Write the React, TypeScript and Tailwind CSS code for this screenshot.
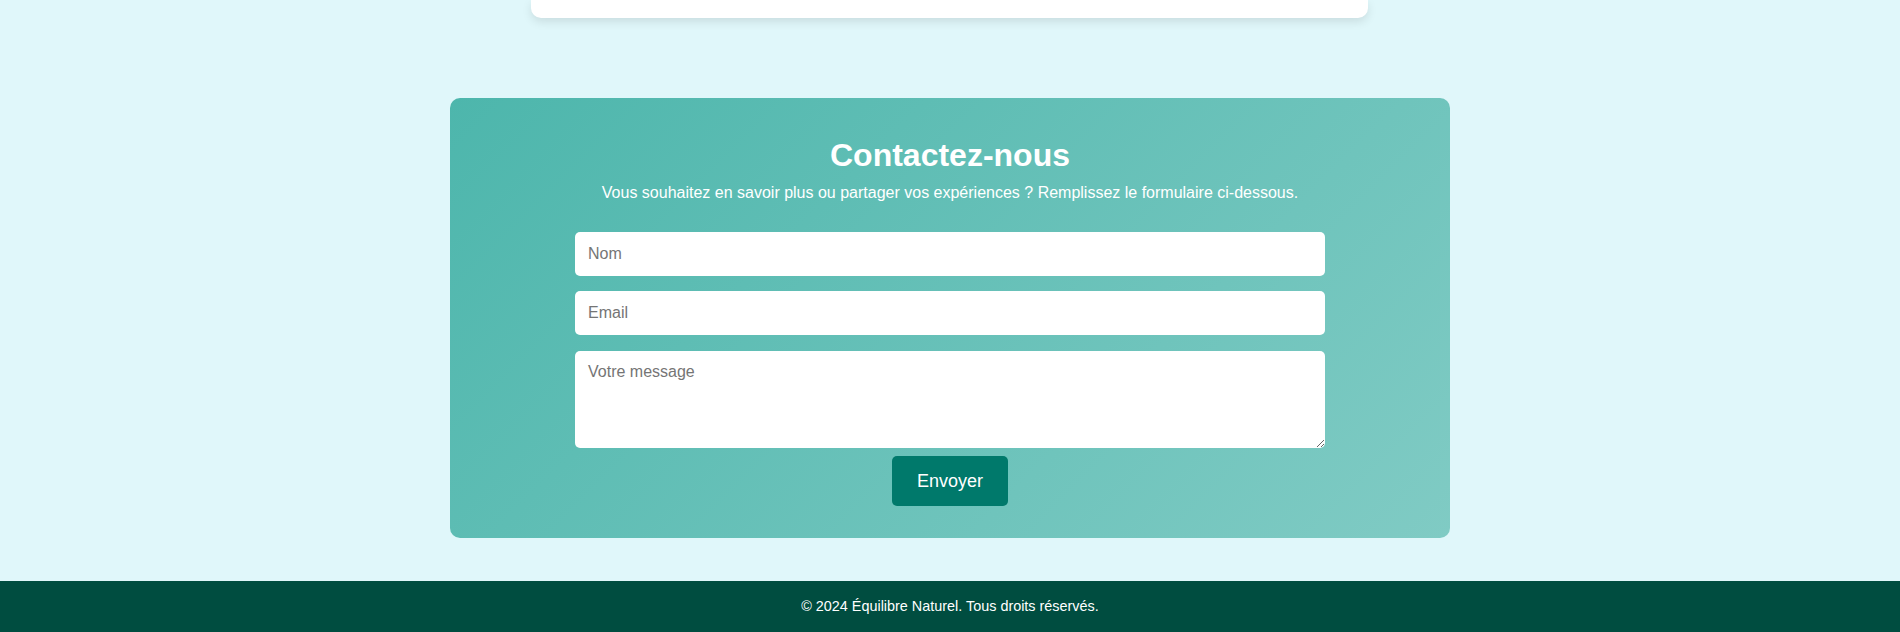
import React from 'react';

export default function App() {
  return (
    <div className="min-h-screen bg-[#e0f7fa] font-['Liberation_Sans',Arial,sans-serif] flex flex-col">
      <div className="flex justify-center">
        <div className="w-[837px] h-[18px] -translate-x-[1px] bg-white rounded-b-[10px] shadow-[0_4px_10px_rgba(0,0,0,0.1)]" />
      </div>

      <div className="flex justify-center mt-[80px]">
        <section className="w-[1000px] rounded-[10px] bg-[linear-gradient(135deg,#4db6ac,#80cbc4)] pt-[39px] pb-[32px] flex flex-col items-center text-white">
          <h2 className="text-[32px] leading-[37px] font-bold">Contactez-nous</h2>
          <p className="mt-[10px] text-[16px] leading-[18px]">
            Vous souhaitez en savoir plus ou partager vos expériences ? Remplissez le formulaire ci-dessous.
          </p>
          <form className="mt-[30px] w-[750px] flex flex-col items-center" onSubmit={(e) => e.preventDefault()}>
            <input
              type="text"
              placeholder="Nom"
              className="w-full h-[44px] rounded-[5px] bg-white px-[13px] text-[16px] text-gray-800 placeholder:text-[#757575] outline-none"
            />
            <input
              type="email"
              placeholder="Email"
              className="mt-[15px] w-full h-[44px] rounded-[5px] bg-white px-[13px] text-[16px] text-gray-800 placeholder:text-[#757575] outline-none"
            />
            <textarea
              placeholder="Votre message"
              className="mt-[16px] w-full h-[97px] rounded-[5px] bg-white px-[13px] py-[12px] text-[16px] leading-[18px] text-gray-800 placeholder:text-[#757575] outline-none block"
            />
            <button
              type="submit"
              className="mt-[8px] h-[50px] w-[116px] rounded-[5px] bg-[#00796b] text-white text-[18px] flex items-center justify-center"
            >
              Envoyer
            </button>
          </form>
        </section>
      </div>

      <footer className="mt-[43px] bg-[#004d40] h-[52px] flex items-center justify-center text-white text-[14.4px]">
        © 2024 Équilibre Naturel. Tous droits réservés.
      </footer>
    </div>
  );
}
